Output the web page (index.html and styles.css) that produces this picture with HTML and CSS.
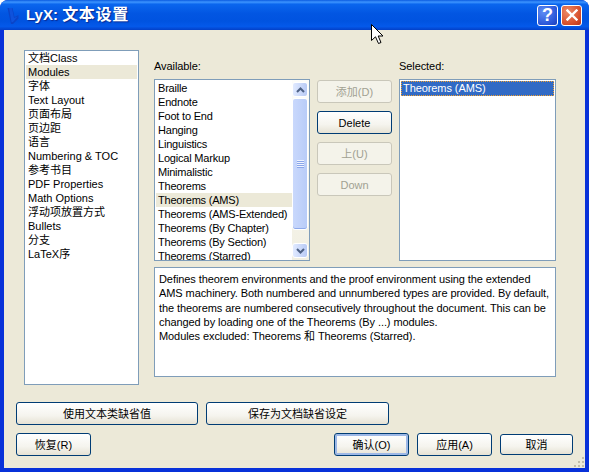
FILE: index.html
```html
<!DOCTYPE html>
<html lang="zh">
<head>
  <meta charset="UTF-8" />
  <title>LyX: 文本设置</title>
  <link rel="stylesheet" href="styles.css">
</head>
<body>

<div class="window">
  <header class="titlebar">
    <svg class="app-icon" width="16" height="18" viewBox="0 0 16 18">
      <path d="M0.5 1 L5.5 1 L7.5 10 L11.5 8 L11.5 11.5 L6 17 L4 17 Z" fill="#0a44c8"/>
      <path d="M2 1 L5 1 L7 11 L10.5 9.5 L6 15 L4.5 15 Z" fill="#0f52dc"/>
    </svg>
    <h1 class="title">LyX: <span class="title-cjk">文本设置</span></h1>
    <div class="caption-btns">
      <button class="caption-btn help">?</button>
      <button class="caption-btn close">
        <svg width="12" height="12" viewBox="0 0 12 12">
          <path d="M1.5 1.5 L10.5 10.5 M10.5 1.5 L1.5 10.5" stroke="#fff" stroke-width="2.4" stroke-linecap="square"/>
        </svg>
      </button>
    </div>
  </header>

  <div class="client">
    <div class="main">
      <ul class="box nav-list">
        <li>文档Class</li>
        <li class="current">Modules</li>
        <li>字体</li>
        <li>Text Layout</li>
        <li>页面布局</li>
        <li>页边距</li>
        <li>语言</li>
        <li>Numbering &amp; TOC</li>
        <li>参考书目</li>
        <li>PDF Properties</li>
        <li>Math Options</li>
        <li>浮动项放置方式</li>
        <li>Bullets</li>
        <li>分支</li>
        <li>LaTeX序</li>
      </ul>

      <div class="modules">
        <div class="module-row">
          <div class="col-available">
            <label class="col-label">Available:</label>
            <div class="box list-box">
              <ul class="items">
                <li>Braille</li>
                <li>Endnote</li>
                <li>Foot to End</li>
                <li>Hanging</li>
                <li>Linguistics</li>
                <li>Logical Markup</li>
                <li>Minimalistic</li>
                <li>Theorems</li>
                <li class="current">Theorems (AMS)</li>
                <li>Theorems (AMS-Extended)</li>
                <li>Theorems (By Chapter)</li>
                <li>Theorems (By Section)</li>
                <li>Theorems (Starred)</li>
              </ul>
              <div class="scrollbar">
                <div class="scroll-btn">
                  <svg width="9" height="6" viewBox="0 0 9 6"><path d="M1 5 L4.5 1.5 L8 5" fill="none" stroke="#4d6185" stroke-width="2"/></svg>
                </div>
                <div class="scroll-thumb"><span class="grip-lines"></span></div>
                <div class="scroll-btn">
                  <svg width="9" height="6" viewBox="0 0 9 6"><path d="M1 1 L4.5 4.5 L8 1" fill="none" stroke="#4d6185" stroke-width="2"/></svg>
                </div>
              </div>
            </div>
          </div>

          <div class="col-actions">
            <button class="btn" disabled>添加(D)</button>
            <button class="btn">Delete</button>
            <button class="btn" disabled>上(U)</button>
            <button class="btn" disabled>Down</button>
          </div>

          <div class="col-selected">
            <label class="col-label">Selected:</label>
            <div class="box list-box">
              <ul class="items selected-items">
                <li class="selected">Theorems (AMS)</li>
              </ul>
            </div>
          </div>
        </div>

        <div class="box description">
          Defines theorem environments and the proof environment using the extended<br>
          AMS machinery. Both numbered and unnumbered types are provided. By default,<br>
          the theorems are numbered consecutively throughout the document. This can be<br>
          changed by loading one of the Theorems (By ...) modules.<br>
          Modules excluded: Theorems 和 Theorems (Starred).
        </div>
      </div>
    </div>

    <div class="defaults-row">
      <button class="btn wide">使用文本类缺省值</button>
      <button class="btn wide">保存为文档缺省设定</button>
    </div>

    <div class="footer-row">
      <button class="btn">恢复(R)</button>
      <div class="footer-right">
        <button class="btn default">确认(O)</button>
        <button class="btn">应用(A)</button>
        <button class="btn cancel">取消</button>
      </div>
    </div>

    <svg class="size-grip" width="12" height="12" viewBox="0 0 12 12">
      <path d="M9 1h2v2H9z M5 5h2v2H5z M9 5h2v2H9z M1 9h2v2H1z M5 9h2v2H5z M9 9h2v2H9z" fill="#c1bda8"/>
    </svg>
  </div>

  <svg class="cursor" width="13" height="21" viewBox="0 0 13 21">
    <path d="M0.5 0.5 L0.5 16.5 L4.5 12.8 L7.5 19.5 L10 18.5 L7.2 12 L12 12 Z" fill="#fff" stroke="#000" stroke-width="1"/>
  </svg>
</div>

</body>
</html>
```

FILE: styles.css
```css
:root {
  --face: #ece9d8;
  --box-border: #7f9db9;
  --btn-border: #003c74;
  --ui-font: "Liberation Sans", "Noto Sans CJK SC", sans-serif;
}

* {
  box-sizing: border-box;
}
html, body {
  margin: 0;
  height: 100%;
  background: #fff;
}
ul {
  margin: 0;
  padding: 0;
  list-style: none;
}

.window {
  position: relative;
  width: 589px;
  height: 472px;
  display: flex;
  flex-direction: column;
  background: #0831d9;
  border-radius: 8px 8px 0 0;
  font: 11px/14px var(--ui-font);
  color: #000;
  overflow: hidden;
}

/* Title bar */
.titlebar {
  height: 30px;
  flex: none;
  display: flex;
  align-items: center;
  padding: 0 7px 0 7px;
  background: linear-gradient(to bottom, #0a5be0 0%, #3d95ff 7%, #0a66ee 14%, #0256e2 45%, #0053e0 70%, #0459ea 88%, #0340c8 100%);
}
.app-icon {
  flex: none;
  margin-top: 1px;
}
.title {
  margin: 0 0 0 3px;
  font: bold 15px/18px var(--ui-font);
  color: #fff;
  text-shadow: 1px 1px 1px #0a2a90;
  white-space: nowrap;
}
.title-cjk {
  font-size: 16px;
  letter-spacing: 0.7px;
}
.caption-btns {
  margin-left: auto;
  display: flex;
  gap: 3px;
}
.caption-btn {
  width: 21px;
  height: 21px;
  padding: 0;
  display: flex;
  align-items: center;
  justify-content: center;
  border: 1px solid #fff;
  border-radius: 3px;
  font: bold 18px/1 "Liberation Sans", sans-serif;
  color: #fff;
}
.caption-btn.help {
  background: radial-gradient(circle at 30% 30%, #5f8ff5, #2a55d8 70%, #1c3fb8);
}
.caption-btn.close {
  background: radial-gradient(circle at 30% 30%, #ec8a68, #d8502c 65%, #b8341a);
}

/* Client area */
.client {
  position: relative;
  flex: 1;
  margin: 0 4px 4px;
  padding: 20px 12px 0;
  background: var(--face);
}
.main {
  display: flex;
  padding-left: 8px;
}
.box {
  background: #fff;
  border: 1px solid var(--box-border);
}
.nav-list {
  width: 115px;
  height: 335px;
  flex: none;
  padding: 0 1px;
}
.nav-list li {
  height: 14px;
  padding-left: 2px;
  white-space: nowrap;
}
.current {
  background: var(--face);
}
.modules {
  margin-left: 15px;
  width: 402px;
  letter-spacing: -0.08px;
}
.module-row {
  display: flex;
}
.col-label {
  display: block;
  height: 29px;
  padding-top: 9px;
}
.col-available {
  width: 156px;
}
.col-selected {
  width: 157px;
  margin-left: 7px;
}
.list-box {
  height: 182px;
  display: flex;
  overflow: hidden;
}
.items {
  flex: 1;
  min-width: 0;
  padding: 1px 0 0 1px;
  overflow: hidden;
}
.items li {
  height: 14px;
  padding-left: 2px;
  white-space: nowrap;
}
.col-available .items li {
  letter-spacing: -0.2px;
}
.col-actions {
  width: 75px;
  margin-left: 7px;
  padding-top: 30px;
  display: flex;
  flex-direction: column;
  gap: 8px;
}
.selected-items {
  padding: 1px;
}
.selected-items .selected {
  height: 15px;
  background: #316ac5;
  color: #fff;
  outline: 1px dotted #f0a030;
  outline-offset: -1px;
}

/* Scrollbar */
.scrollbar {
  width: 17px;
  flex: none;
  display: flex;
  flex-direction: column;
  padding: 2px 1px 2px 0;
  background: linear-gradient(to bottom, #fdfdfa, #f1efe2);
}
.scroll-btn {
  height: 15px;
  flex: none;
  display: flex;
  align-items: center;
  justify-content: center;
  border: 1px solid #fff;
  border-radius: 3px;
  background: linear-gradient(to right, #e1eaff, #b8caf5);
}
.scroll-thumb {
  height: 133px;
  margin: 1px 0 13px;
  display: flex;
  align-items: center;
  justify-content: center;
  border: 1px solid #fff;
  border-radius: 3px;
  background: linear-gradient(to right, #c9d8fc, #b8ccf8);
  box-shadow: inset 0 -1px 0 #8eaaea;
}
.grip-lines {
  width: 7px;
  height: 8px;
  background: repeating-linear-gradient(to bottom, #eef3ff 0 1px, #8aa6ea 1px 2px);
}

.description {
  margin-top: 6px;
  height: 110px;
  padding: 4px 4px;
  line-height: 14.3px;
  white-space: nowrap;
}

/* Buttons */
.btn {
  width: 75px;
  height: 23px;
  padding: 0;
  flex: none;
  border: 1px solid var(--btn-border);
  border-radius: 3px;
  background: linear-gradient(to bottom, #fff 0%, #f5f4ee 60%, #e6e2d4 100%);
  font: 11px/14px var(--ui-font);
  color: #000;
  white-space: nowrap;
}
.btn:disabled {
  border-color: #c9c7ba;
  background: #f4f3ea;
  color: #a1a192;
}
.btn.default {
  box-shadow: inset 0 0 0 2px #9db8e6;
}
.btn.wide {
  width: 182px;
}
.btn.wide + .btn.wide {
  width: 183px;
}
.btn.cancel {
  width: 73px;
  height: 21px;
  margin-top: 1px;
}
.defaults-row {
  margin-top: 17px;
  display: flex;
  gap: 8px;
}
.footer-row {
  margin-top: 8px;
  display: flex;
  justify-content: space-between;
}
.footer-right {
  display: flex;
  gap: 8px;
}

/* Overlays */
.size-grip {
  position: absolute;
  right: 0;
  bottom: 0;
}
.cursor {
  position: absolute;
  left: 371px;
  top: 24px;
}
```
